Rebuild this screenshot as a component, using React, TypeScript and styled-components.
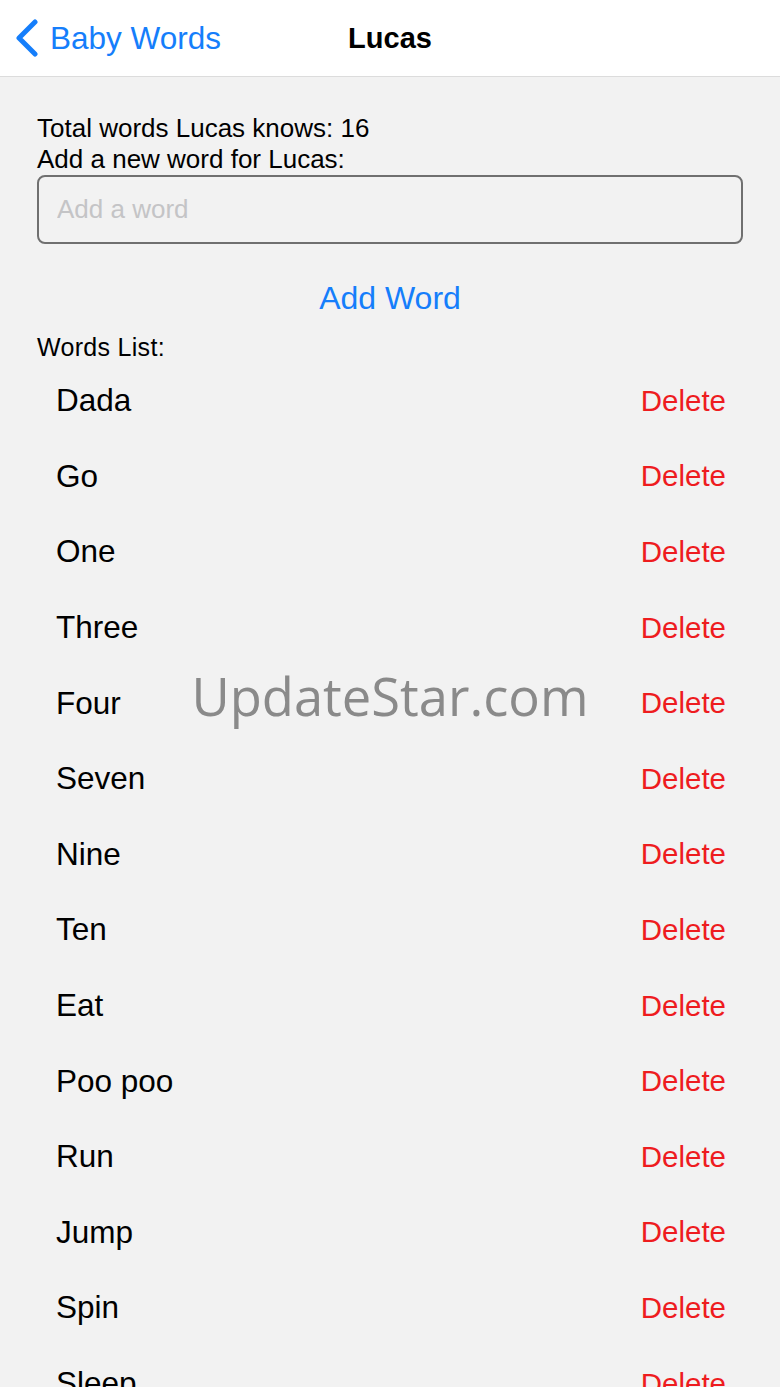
import styled, { createGlobalStyle } from 'styled-components'

const GlobalStyle = createGlobalStyle`
  html, body {
    margin: 0;
    padding: 0;
    background: #f2f2f2;
    font-family: "Liberation Sans", Arial, sans-serif;
  }
`

const Page = styled.div`
  position: relative;
  width: 780px;
  height: 1387px;
  overflow: hidden;
  background: #f2f2f2;
`

const NavBar = styled.div`
  position: relative;
  height: 76px;
  background: #fff;
  border-bottom: 1px solid #dcdcdc;
  display: flex;
  align-items: center;
  justify-content: center;
`

const BackButton = styled.div`
  position: absolute;
  left: 14px;
  top: 0;
  height: 76px;
  display: flex;
  align-items: center;
  gap: 10px;
  color: #157efb;
  font-size: 31.5px;
`

const NavTitle = styled.div`
  font-size: 29px;
  font-weight: 700;
  color: #000;
`

const Content = styled.div`
  padding: 36px 37px 0 37px;
  display: flex;
  flex-direction: column;
`

const InfoLine = styled.div`
  font-size: 26px;
  line-height: 31px;
  color: #000;
`

const WordInput = styled.input`
  box-sizing: border-box;
  width: 100%;
  height: 69px;
  margin: 0;
  border: 2px solid #707070;
  border-radius: 8px;
  background: transparent;
  padding: 0 18px;
  font-family: inherit;
  font-size: 26px;
  color: #000;
  outline: none;
  &::placeholder {
    color: #c4c4c6;
  }
`

const AddButton = styled.div`
  align-self: center;
  margin-top: 34px;
  font-size: 32px;
  color: #157efb;
  line-height: 40px;
`

const ListLabel = styled.div`
  margin-top: 14px;
  font-size: 25px;
  letter-spacing: 0.3px;
  line-height: 30px;
  color: #000;
`

const List = styled.div`
  display: flex;
  flex-direction: column;
  margin-top: 1px;
`

const Row = styled.div`
  flex: none;
  height: 75.6px;
  display: flex;
  align-items: center;
  justify-content: space-between;
  padding: 0 17px 0 19px;
`

const Word = styled.span`
  font-size: 31.5px;
  color: #000;
`

const DeleteLink = styled.span`
  font-size: 29.5px;
  color: #ee1c1f;
`

const Watermark = styled.div`
  position: absolute;
  left: 0;
  right: 0;
  top: 660px;
  text-align: center;
  font-family: "Open Sans", sans-serif;
  font-size: 52.5px;
  color: #8a8a8a;
  pointer-events: none;
`

const words = [
  'Dada', 'Go', 'One', 'Three', 'Four', 'Seven', 'Nine', 'Ten',
  'Eat', 'Poo poo', 'Run', 'Jump', 'Spin', 'Sleep', 'Walk', 'Milk',
]

export default function App() {
  return (
    <Page>
      <GlobalStyle />
      <NavBar>
        <BackButton>
          <svg width="26" height="38" viewBox="0 0 26 38">
            <path d="M21 3 L5 19 L21 35" fill="none" stroke="#157efb" strokeWidth="5" strokeLinecap="round" strokeLinejoin="round" />
          </svg>
          <span>Baby Words</span>
        </BackButton>
        <NavTitle>Lucas</NavTitle>
      </NavBar>
      <Content>
        <InfoLine>Total words Lucas knows: {words.length}</InfoLine>
        <InfoLine>Add a new word for Lucas:</InfoLine>
        <WordInput placeholder="Add a word" />
        <AddButton>Add Word</AddButton>
        <ListLabel>Words List:</ListLabel>
        <List>
          {words.map((w) => (
            <Row key={w}>
              <Word>{w}</Word>
              <DeleteLink>Delete</DeleteLink>
            </Row>
          ))}
        </List>
      </Content>
      <Watermark>UpdateStar.com</Watermark>
    </Page>
  )
}
